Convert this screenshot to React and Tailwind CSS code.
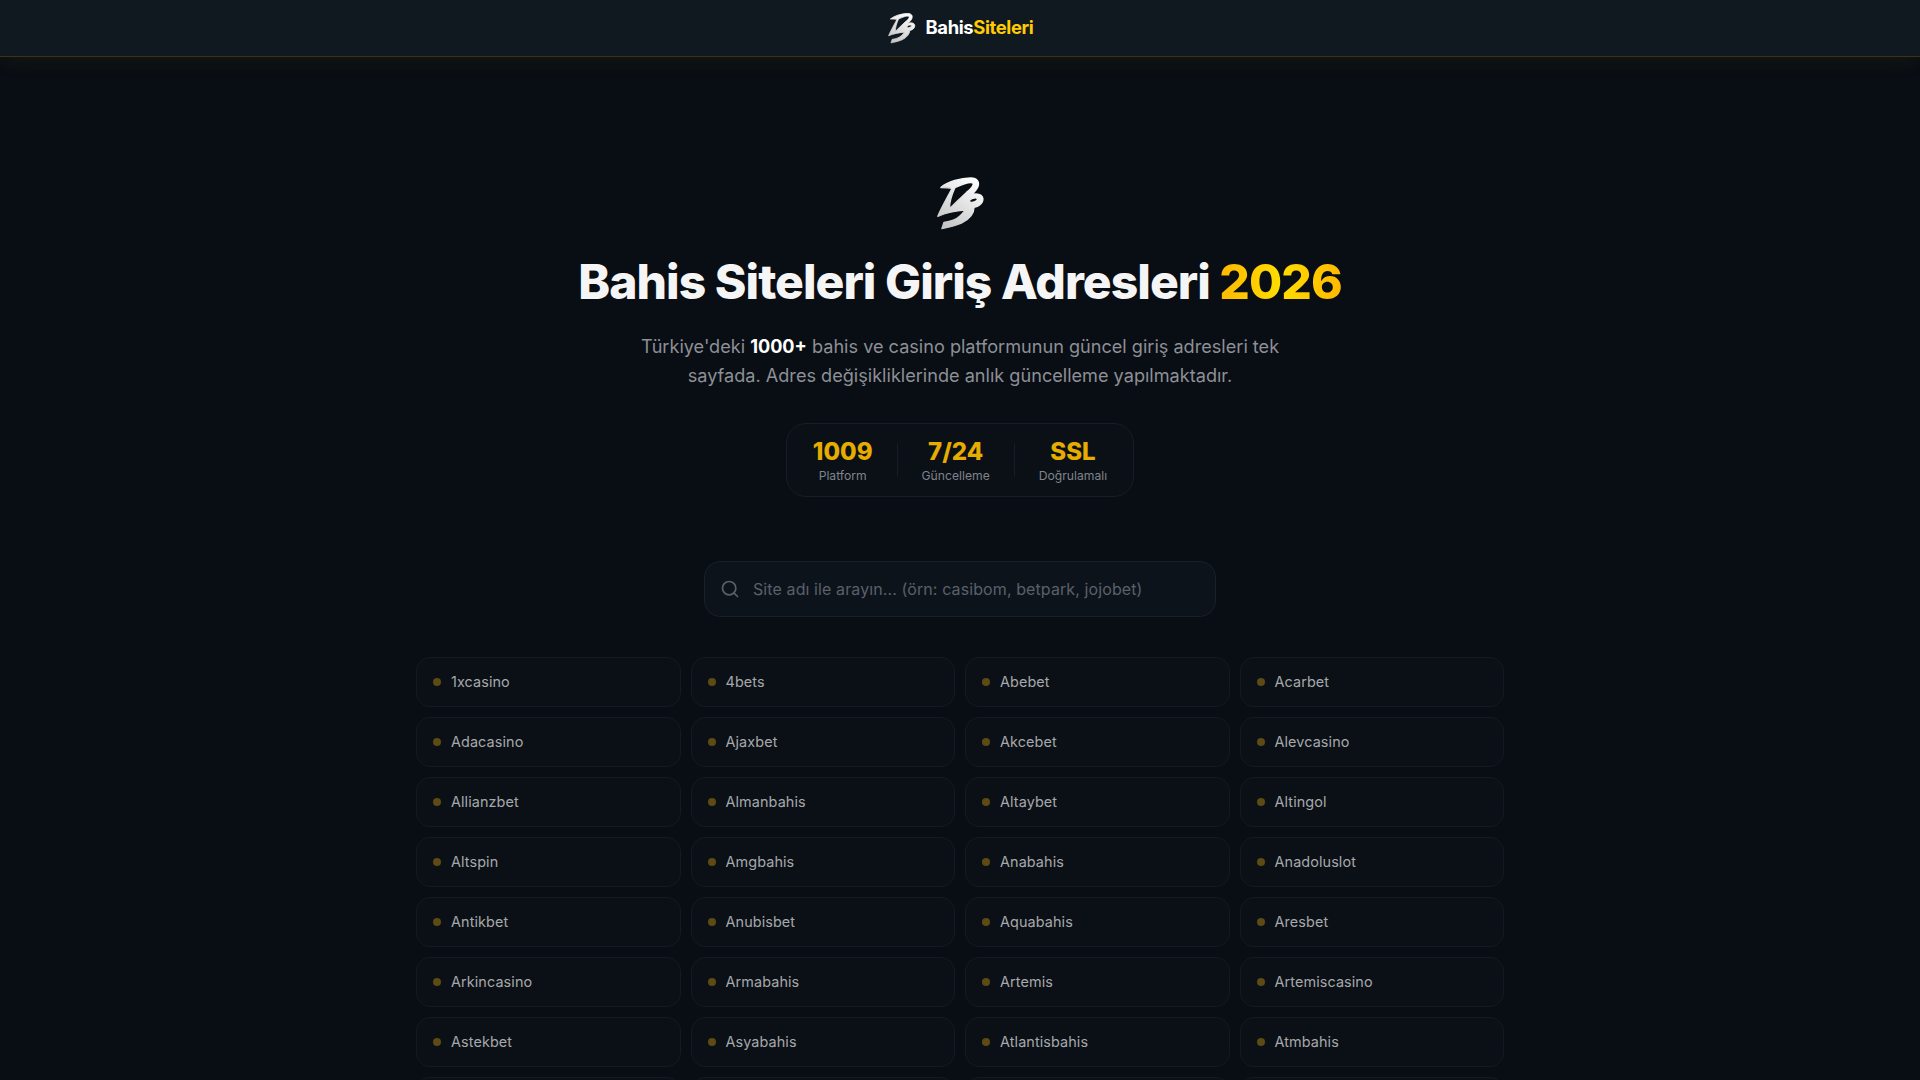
import React from 'react';
import { Search } from 'lucide-react';

const SITES = [
  '1xcasino', '4bets', 'Abebet', 'Acarbet',
  'Adacasino', 'Ajaxbet', 'Akcebet', 'Alevcasino',
  'Allianzbet', 'Almanbahis', 'Altaybet', 'Altingol',
  'Altspin', 'Amgbahis', 'Anabahis', 'Anadoluslot',
  'Antikbet', 'Anubisbet', 'Aquabahis', 'Aresbet',
  'Arkincasino', 'Armabahis', 'Artemis', 'Artemiscasino',
  'Astekbet', 'Asyabahis', 'Atlantisbahis', 'Atmbahis',
  '', '', '', '',
];

const STATS = [
  { value: '1009', label: 'Platform' },
  { value: '7/24', label: 'Güncelleme' },
  { value: 'SSL', label: 'Doğrulamalı' },
];

const Logo = ({ className }) => (
  <svg viewBox="108 54 146 158" className={className}>
    <defs>
      <linearGradient id="logo-fill" x1="0.8" y1="0" x2="0.2" y2="1">
        <stop offset="0" stopColor="#ffffff" />
        <stop offset="1" stopColor="#c4c4c4" />
      </linearGradient>
    </defs>
    <path
      fill="url(#logo-fill)"
      stroke="url(#logo-fill)"
      strokeWidth="4"
      strokeLinejoin="round"
      fillRule="evenodd"
      d="M125 88 C145 70 185 60 212 60 C232 60 240 72 232 88 C227 98 218 106 208 112 C222 104 245 104 248 120 C249 134 235 144 222 146 C222 165 205 182 185 192 C165 200 148 204 128 208 L134 190 C150 188 170 182 180 172 C186 166 192 160 196 154 C170 156 140 162 116 172 C125 150 142 120 158 90 C150 88 135 88 125 88 Z M166 88 C188 78 205 70 218 74 C224 78 214 92 200 102 C184 116 166 136 150 150 C150 130 157 108 166 88 Z M210 124 C216 118 230 116 232 121 C233 127 218 133 212 131 C209 130 208 127 210 124 Z"
    />
  </svg>
);

const SiteCard = ({ name }) => (
  <div className="flex h-[50px] items-center gap-[10px] rounded-[14px] border border-[#141a22] bg-[#0b1016] px-4">
    <span className="h-2 w-2 shrink-0 rounded-full bg-[#5e4a14]" />
    <span className="text-[14.4px] tracking-[0.1px] text-[#a6a8ab]">{name}</span>
  </div>
);

export default function App() {
  return (
    <div className="h-screen overflow-hidden bg-[#090d14] font-['Inter',sans-serif] text-white">
      <header className="flex h-[57px] items-center justify-center gap-[10px] border-b border-[#3a3316] bg-[#101820] shadow-[0_4px_24px_rgba(255,204,0,0.06)]">
        <Logo className="h-[32px] w-[29px]" />
        <div className="text-[18.4px] font-bold tracking-[-0.37px]">
          Bahis<span className="text-[#ffcc00]">Siteleri</span>
        </div>
      </header>

      <main className="mx-auto max-w-[1120px] px-4">
        <section className="flex flex-col items-center pt-[119px]">
          <Logo className="h-[54px] w-[50px]" />
          <h1 className="mt-[21px] text-[48px] leading-[62px] font-extrabold tracking-[-0.96px] text-[#f5f5f5]">
            Bahis Siteleri Giriş Adresleri{' '}
            <span className="bg-gradient-to-r from-[#ffb800] via-[#ffdd00] to-[#ffb800] bg-clip-text text-transparent">2026</span>
          </h1>
          <p className="mt-[19px] w-[680px] text-center text-[18.13px] leading-[29.4px] text-[#8d9096]">
            Türkiye'deki <strong className="font-bold text-white">1000+</strong> bahis ve casino platformunun güncel giriş adresleri tek sayfada. Adres değişikliklerinde anlık güncelleme yapılmaktadır.
          </p>
          <div className="mt-[32px] flex items-center gap-6 rounded-[20px] border border-[#171d26] bg-[#0b1016] px-[26px] py-[13px]">
            {STATS.map((s, i) => (
              <React.Fragment key={s.label}>
                {i > 0 && <div className="h-8 w-px bg-[#171d26]" />}
                <div className="flex flex-col items-center">
                  <div className="text-[24px] leading-[30px] font-extrabold text-[#e6ac00]">{s.value}</div>
                  <div className="mt-px text-[12.16px] leading-[15px] text-[#7f848d]">{s.label}</div>
                </div>
              </React.Fragment>
            ))}
          </div>
        </section>

        <div className="mx-auto mt-[64px] flex h-[56px] w-[512px] items-center gap-[13px] rounded-2xl border border-[#1a2029] bg-[#0d131a] pr-4 pl-[15px]">
          <Search size={20} className="shrink-0 text-[#5a606a]" />
          <input
            readOnly
            placeholder="Site adı ile arayın... (örn: casibom, betpark, jojobet)"
            className="w-full bg-transparent text-[16px] tracking-[0.1px] outline-none placeholder:text-[#5a606a]"
          />
        </div>

        <div className="mt-[40px] grid grid-cols-4 gap-[10px]">
          {SITES.map((name, i) => (
            <SiteCard key={i} name={name} />
          ))}
        </div>
      </main>
    </div>
  );
}
